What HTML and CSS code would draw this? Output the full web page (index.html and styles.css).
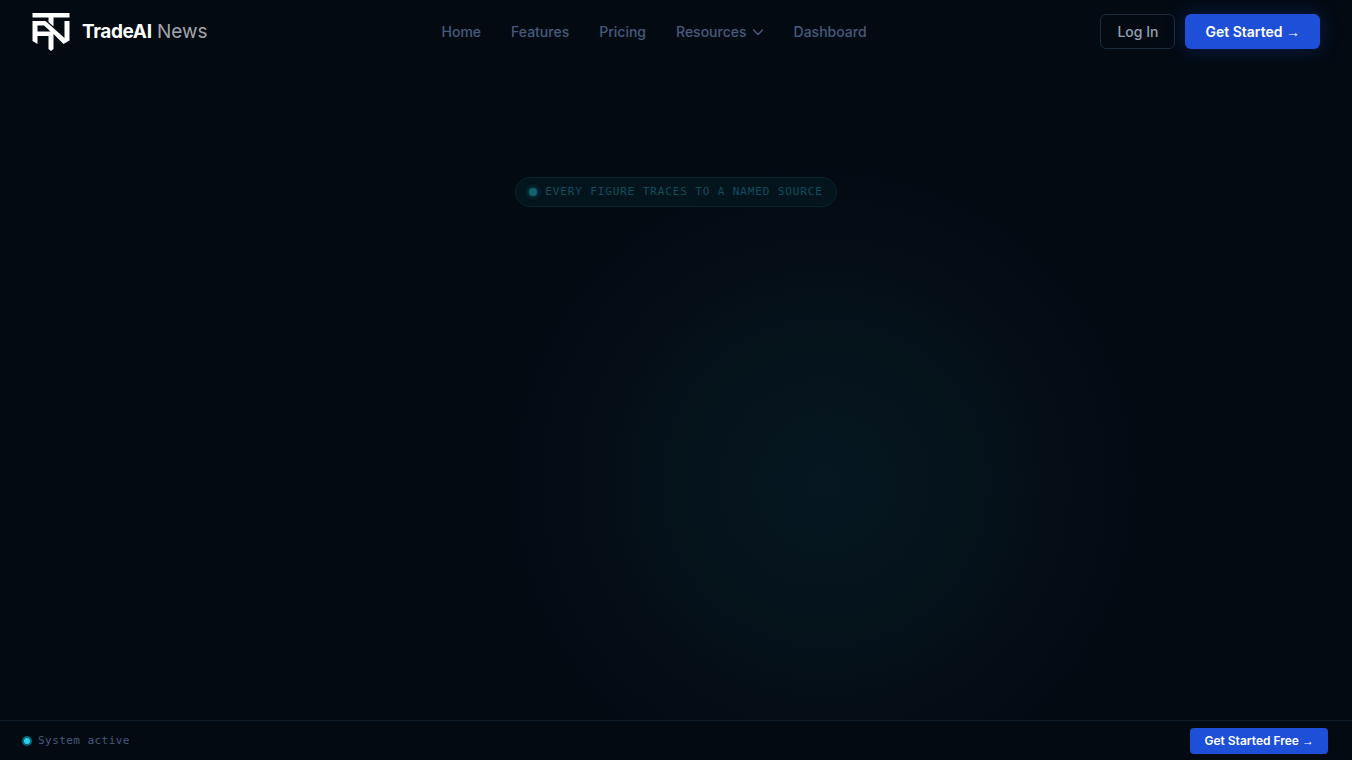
FILE: index.html
```html
<!DOCTYPE html>
<html lang="en">
<head>
<meta charset="utf-8">
<title>TradeAI News</title>
<link rel="stylesheet" href="styles.css">
</head>
<body>
<header class="header">
  <a class="brand" href="#">
    <svg class="brand-mark" viewBox="0 0 38 38" aria-hidden="true">
      <path fill="#fff" d="M0.5 0H37.5V4.5H21.5V13.5L16.5 9V4.5H0.5Z"/>
      <path fill="#fff" d="M0.5 8H13.5L32.5 25V8H37.5V27.5L31.5 31L21.5 21V36L19 38L16.5 36V23H5.5V31L0.5 28ZM5.5 12.5V18.5H18.5L12 12.5Z"/>
    </svg>
    <span class="brand-name"><strong>TradeAI</strong> News</span>
  </a>
  <nav class="nav">
    <a href="#">Home</a>
    <a href="#">Features</a>
    <a href="#">Pricing</a>
    <button type="button" class="nav-menu">Resources
      <svg class="chevron" viewBox="0 0 12 12" aria-hidden="true"><path d="M1.5 4L6 8.5L10.5 4" fill="none" stroke="currentColor" stroke-width="1.5" stroke-linecap="round" stroke-linejoin="round"/></svg>
    </button>
    <a href="#">Dashboard</a>
  </nav>
  <div class="actions">
    <a class="login" href="#">Log In</a>
    <a class="cta" href="#">Get Started <span class="arrow">→</span></a>
  </div>
</header>
<main class="hero">
  <p class="badge"><span class="badge-dot"></span>EVERY FIGURE TRACES TO A NAMED SOURCE</p>
</main>
<footer class="status-bar">
  <p class="status"><span class="status-dot"></span>System active</p>
  <a class="cta-small" href="#">Get Started Free <span class="arrow">→</span></a>
</footer>
</body>
</html>
```
FILE: styles.css
```css
* { box-sizing: border-box; }
body {
  margin: 0;
  min-height: 100vh;
  display: flex;
  flex-direction: column;
  background: #030a12;
  font-family: Inter, "Liberation Sans", sans-serif;
}
a { text-decoration: none; color: inherit; }
p { margin: 0; }
.header {
  display: flex;
  justify-content: space-between;
  align-items: center;
  height: 63px;
  padding: 0 32px;
}
.brand {
  display: flex;
  align-items: center;
  gap: 12px;
  color: #a1a5ad;
  font-size: 19px;
}
.brand-mark { width: 38px; height: 38px; }
.brand-name strong { color: #fff; font-weight: 700; letter-spacing: -0.02em; }
.nav {
  display: flex;
  align-items: center;
  gap: 30px;
  color: #475a7c;
  font-size: 14px;
  font-weight: 500;
}
.nav-menu {
  display: flex;
  align-items: center;
  gap: 5px;
  padding: 0;
  border: 0;
  background: none;
  color: inherit;
  font: inherit;
}
.chevron { width: 12px; height: 12px; }
.actions {
  display: flex;
  justify-content: flex-end;
  gap: 10px;
  font-size: 14px;
  line-height: 17px;
}
.login {
  padding: 8px 16px;
  border: 1px solid #1a2c3d;
  border-radius: 6px;
  color: #94a0b3;
  font-weight: 500;
}
.cta {
  padding: 9px 20px;
  border-radius: 6px;
  background: #1d4fd8;
  color: #fff;
  font-weight: 600;
  box-shadow: 0 0 20px rgba(29, 79, 216, 0.3);
}
.arrow { font-family: "Liberation Sans", sans-serif; font-weight: 400; line-height: 1; }
.hero {
  flex: 1;
  display: flex;
  justify-content: center;
  align-items: flex-start;
  padding-top: 114px;
  background: radial-gradient(circle at 61% 64%, #061721 0, #05131b 140px, #050e17 220px, #030a12 320px);
}
.badge {
  display: flex;
  align-items: center;
  gap: 8px;
  padding: 7px 13px;
  border: 1px solid #07242e;
  border-radius: 15px;
  background: #04141c;
  color: #0d4f5e;
  font-family: "DejaVu Sans Mono", monospace;
  font-size: 11px;
  line-height: 14px;
  letter-spacing: 0.08em;
}
.badge-dot {
  width: 8px;
  height: 8px;
  border-radius: 50%;
  background: #0e6370;
  box-shadow: 0 0 5px #0e6370;
}
.status-bar {
  display: flex;
  justify-content: space-between;
  align-items: center;
  height: 40px;
  padding: 0 24px;
  border-top: 1px solid #111e2b;
}
.status {
  display: flex;
  align-items: center;
  gap: 8px;
  color: #475a7c;
  font-family: "DejaVu Sans Mono", monospace;
  font-size: 11px;
  letter-spacing: 0.04em;
}
.status-dot {
  width: 6px;
  height: 6px;
  border-radius: 50%;
  background: #22d3ee;
  box-shadow: 0 0 0 2px #0b6575;
}
.cta-small {
  padding: 5px 14px;
  border-radius: 4px;
  background: #1d4fd8;
  color: #fff;
  font-size: 12px;
  font-weight: 600;
  line-height: 16px;
}
```
